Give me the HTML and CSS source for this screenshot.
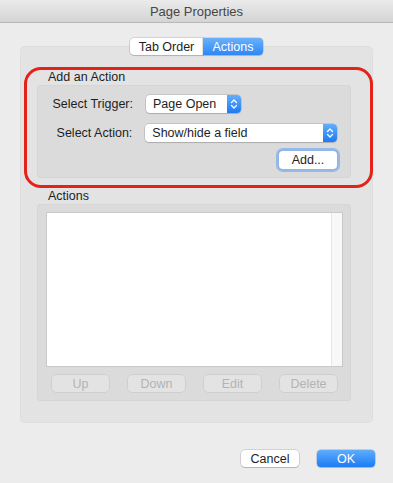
FILE: index.html
```html
<!DOCTYPE html>
<html lang="en">
<head>
    <meta charset="UTF-8">
    <meta name="viewport" content="width=device-width, initial-scale=1.0">
    <title>Page Properties</title>
    <link rel="stylesheet" href="styles.css">
</head>
<body>
    <div class="window">
        <header class="titlebar">Page Properties</header>
        <main class="content">
            <div class="tabs">
                <button class="seg">Tab Order</button>
                <button class="seg active">Actions</button>
            </div>
            <section class="tabpanel">
                <div class="group">
                    <div class="group-title">Add an Action</div>
                    <div class="group-box add-box">
                        <div class="row">
                            <label class="row-label">Select Trigger:</label>
                            <div class="popup short">
                                <span class="popup-text">Page Open</span>
                                <span class="stepper">
                                    <svg width="14" height="18" viewBox="0 0 14 18"><path d="M4.5 7.5 L7 5 L9.5 7.5 M4.5 10.5 L7 13 L9.5 10.5" fill="none" stroke="#fff" stroke-width="1.3" stroke-linecap="round" stroke-linejoin="round"/></svg>
                                </span>
                            </div>
                        </div>
                        <div class="row">
                            <label class="row-label">Select Action:</label>
                            <div class="popup wide">
                                <span class="popup-text">Show/hide a field</span>
                                <span class="stepper">
                                    <svg width="14" height="18" viewBox="0 0 14 18"><path d="M4.5 7.5 L7 5 L9.5 7.5 M4.5 10.5 L7 13 L9.5 10.5" fill="none" stroke="#fff" stroke-width="1.3" stroke-linecap="round" stroke-linejoin="round"/></svg>
                                </span>
                            </div>
                        </div>
                        <div class="add-row">
                            <button class="btn focused">Add...</button>
                        </div>
                    </div>
                </div>
                <div class="group">
                    <div class="group-title">Actions</div>
                    <div class="group-box list-box">
                        <div class="list">
                            <div class="list-body"></div>
                            <div class="scrolltrack"></div>
                        </div>
                        <div class="list-buttons">
                            <button class="btn disabled">Up</button>
                            <button class="btn disabled">Down</button>
                            <button class="btn disabled">Edit</button>
                            <button class="btn disabled">Delete</button>
                        </div>
                    </div>
                </div>
                <div class="highlight"></div>
            </section>
            <footer class="footer">
                <button class="btn">Cancel</button>
                <button class="btn primary">OK</button>
            </footer>
        </main>
    </div>
</body>
</html>
```

FILE: styles.css
```css
body{margin:0; background:#ececec; font-family:"Liberation Sans", Arial, sans-serif; color:#222;}
.window{width:393px; height:483px; background:#ececec; overflow:hidden;}

.titlebar{height:22px; line-height:23px; text-align:center; font-size:13px; color:#464646;
    background:linear-gradient(#ebebeb, #d4d4d4); border-bottom:1px solid #b8b8b8;}

.content{padding-top:15px; display:flex; flex-direction:column;}

/* segmented control */
.tabs{display:flex; justify-content:center; position:relative; z-index:1;}
.seg{height:17px; padding:0; border:0; font:12.5px "Liberation Sans", Arial, sans-serif; color:#1e1e1e;
    background:#fff; box-shadow:0 0 0 0.5px rgba(0,0,0,.22), 0 1px 1px rgba(0,0,0,.12);}
.seg:first-child{width:73px; border-radius:4px 0 0 4px;}
.seg.active{width:60px; border-radius:0 4px 4px 0; color:#fff; background:linear-gradient(#6bb1fb, #2b88f6);}

.tabpanel{position:relative; margin:-9px 0 0 20px; width:353px; height:377px; box-sizing:border-box;
    padding:24px 22px 0 17px; background:#e3e3e3; border-radius:5px; box-shadow:inset 0 0 0 1px #dedede;}

.group-title{height:15px; line-height:14px; font-size:12.5px; padding-left:11px; color:#1e1e1e;}
.group-box{background:#dbdbdb; border-radius:4px; box-shadow:inset 0 0 0 1px #d5d5d5;}

.add-box{height:93px; box-sizing:border-box; padding:10px 14px 0 0; display:flex; flex-direction:column; gap:11px;}
.row{display:flex; align-items:center; height:18px;}
.row-label{width:96px; text-align:right; font-size:12.5px; margin-right:13px; color:#1e1e1e;}
.popup{height:18px; display:flex; align-items:center; background:#fff; border-radius:4px;
    box-shadow:0 0 0 0.5px rgba(0,0,0,.2), 0 1px 1px rgba(0,0,0,.12);}
.popup.short{width:95px;}
.popup.wide{width:193px;}
.popup-text{flex:1; padding-left:7px; font-size:12.5px; color:#1e1e1e;}
.stepper{width:14px; height:18px; border-radius:0 4px 4px 0; background:linear-gradient(#63aefb, #1b7bf5);}
.stepper svg{display:block;}
.add-row{display:flex; justify-content:flex-end; margin-top:-2px;}

.btn{height:17px; padding:0; border:0; border-radius:4px; background:#fff;
    font:12.5px "Liberation Sans", Arial, sans-serif; color:#1e1e1e;
    box-shadow:0 0 0 0.5px rgba(0,0,0,.22), 0 1px 1px rgba(0,0,0,.14);}
.add-row .btn{width:58px; height:18px;}
.btn.focused{box-shadow:0 0 0 1px #8fb5ea, 0 0 0 3px rgba(96,154,236,.55);}
.btn.disabled{width:57px; background:#e3e3e3; color:#b3b3b3; box-shadow:0 0 0 0.5px rgba(0,0,0,.1);}

.group + .group .group-title{margin-top:11px;}
.list-box{height:197px; box-sizing:border-box; padding:8px 8px 0 9px;}
.list{height:155px; display:flex; background:#fff; box-shadow:inset 0 0 0 1px #c9c9c9; padding:1px; box-sizing:border-box;}
.list-body{flex:1;}
.scrolltrack{width:10px; background:#f8f8f8; border-left:1px solid #e6e6e6;}
.list-buttons{display:flex; gap:19px; padding:8px 0 0 6px;}

.highlight{position:absolute; left:4px; top:21px; width:349px; height:121px; box-sizing:border-box;
    border:3px solid #e5221a; border-radius:17px;}

.footer{display:flex; justify-content:flex-end; gap:18px; padding:27px 18px 0 0;}
.footer .btn{width:58px;}
.btn.primary{color:#fff; background:linear-gradient(#5fadfb, #1c7cf5); box-shadow:0 0 0 0.5px rgba(0,60,160,.35), 0 1px 1px rgba(0,0,0,.12);}
```
